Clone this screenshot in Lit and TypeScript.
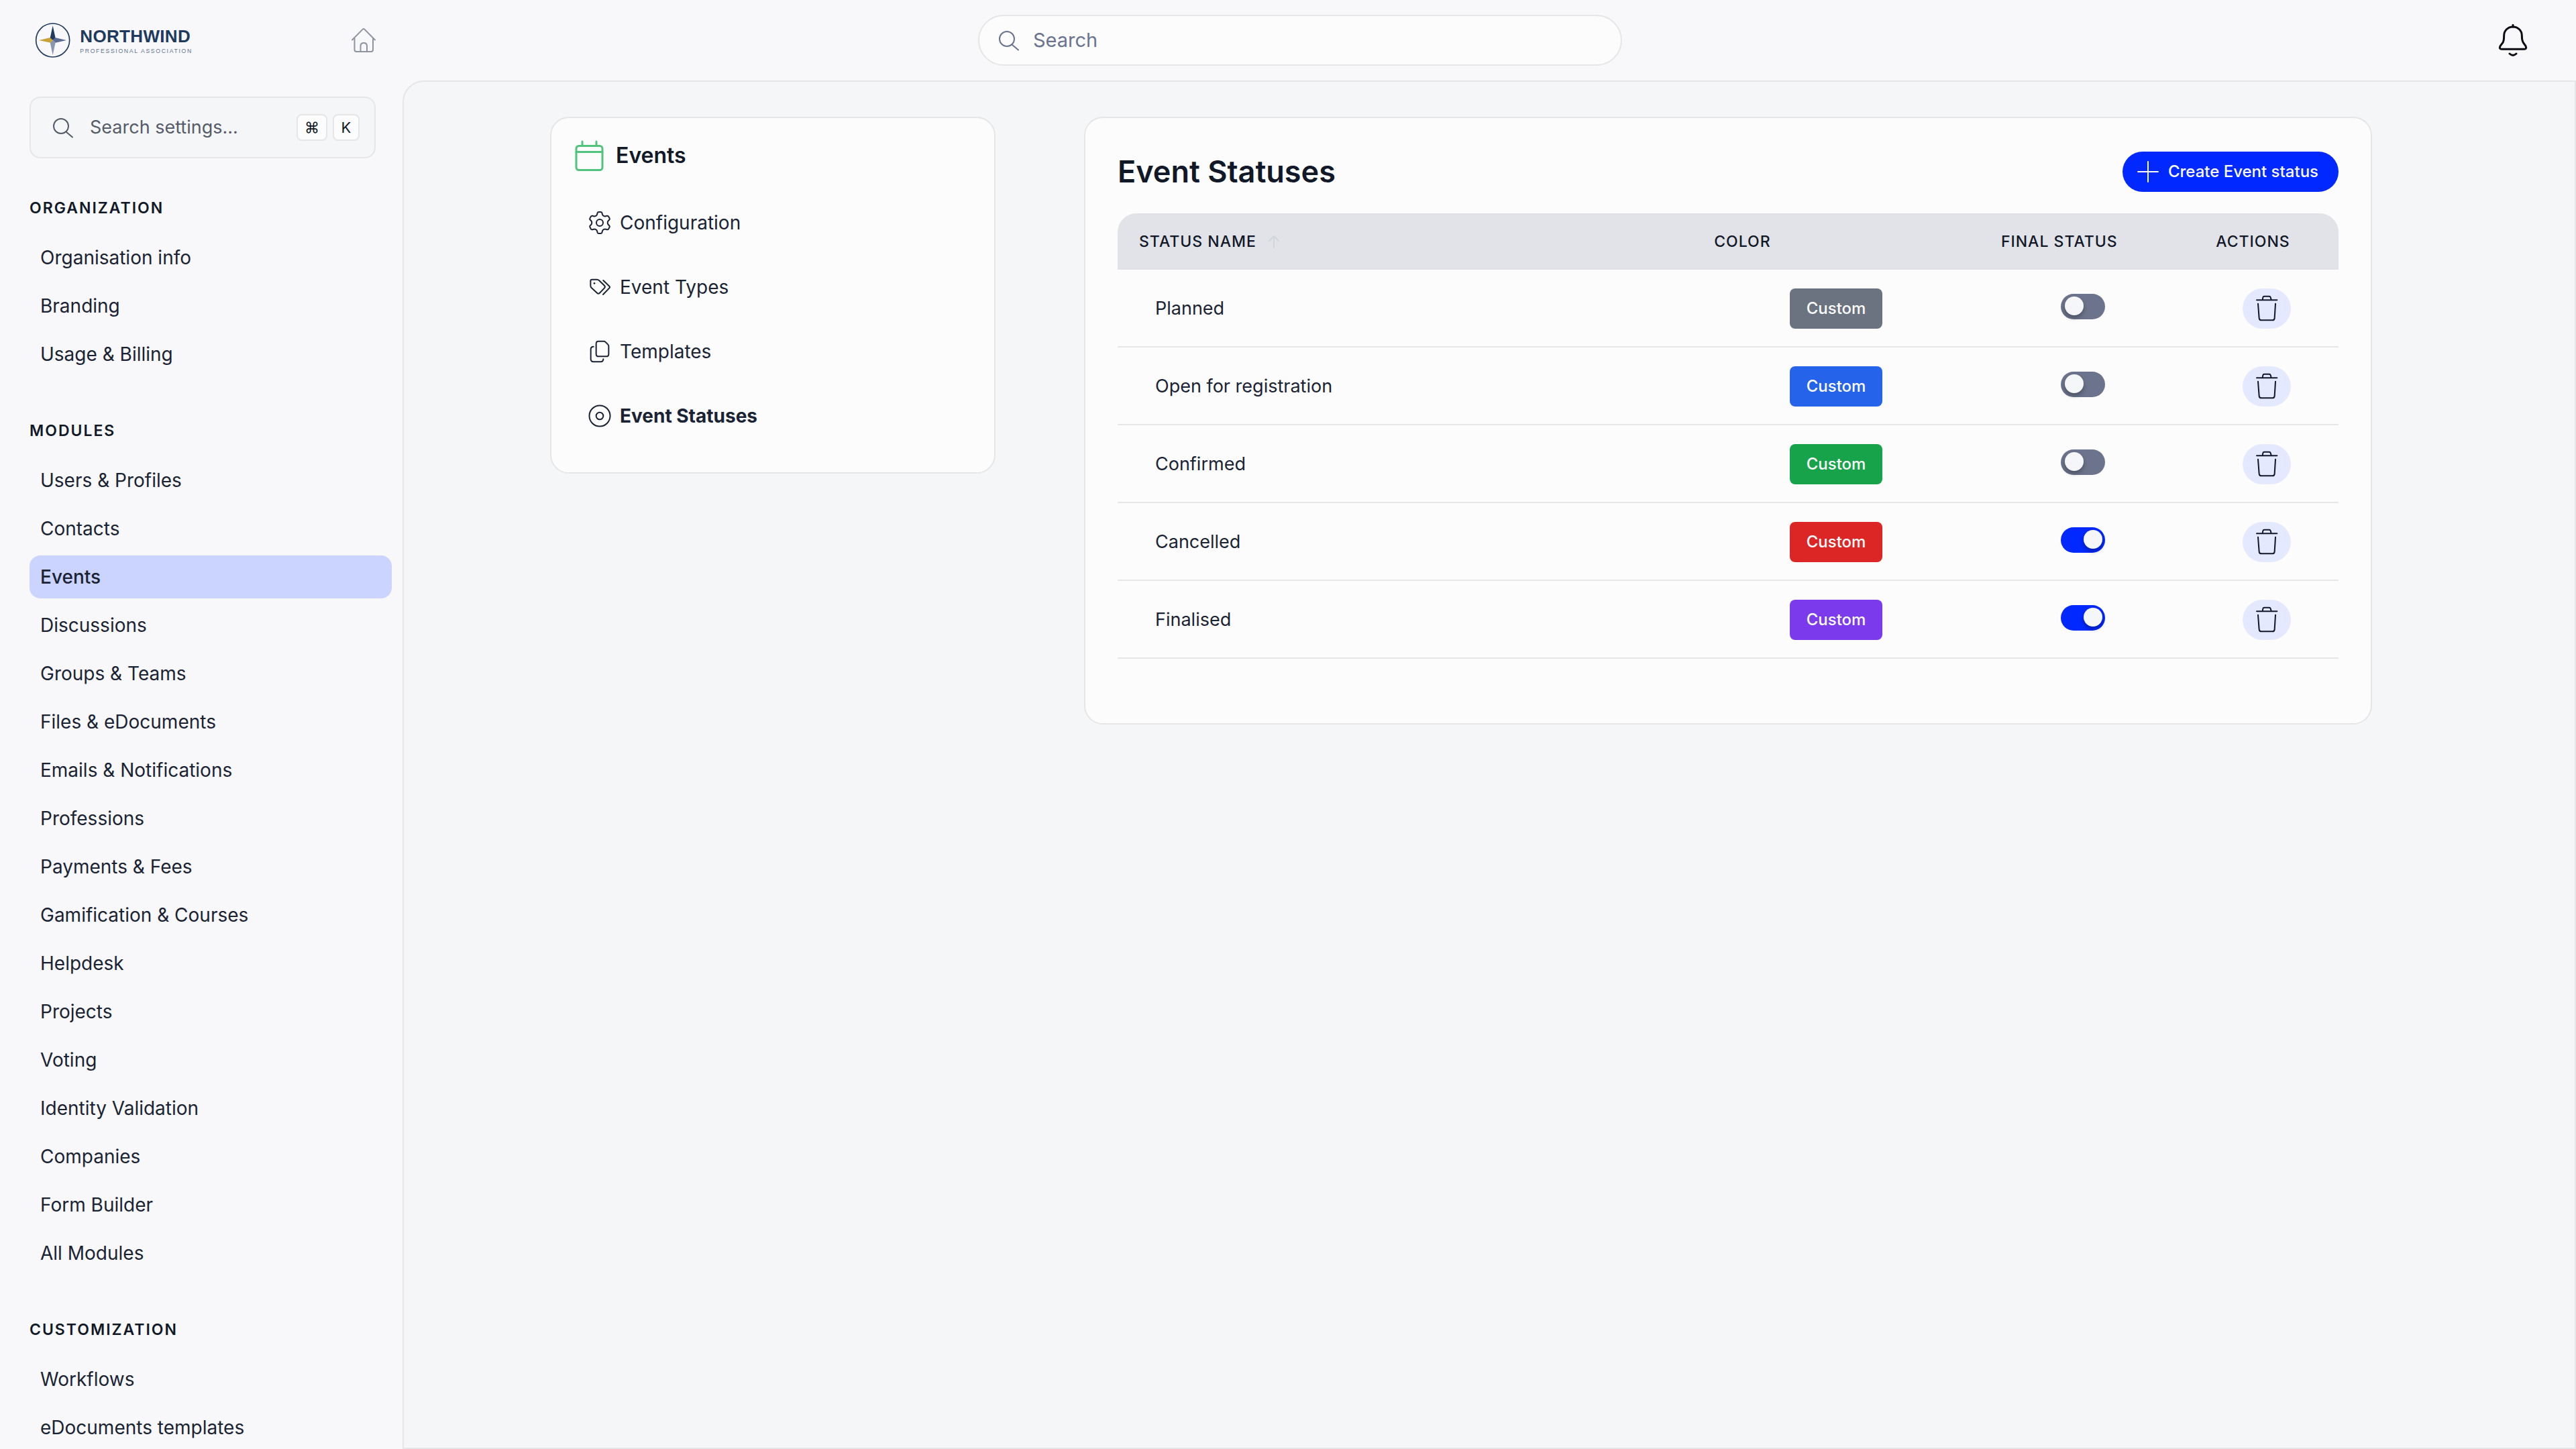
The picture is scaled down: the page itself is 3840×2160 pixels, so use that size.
import { LitElement, html, css, svg, nothing, TemplateResult } from "lit";
import { customElement, state } from "lit/decorators.js";

interface NavGroup {
  title: string;
  items: string[];
}

interface EventStatus {
  name: string;
  color: string;
  final: boolean;
}

const NAV: NavGroup[] = [
  { title: "Organization", items: ["Organisation info", "Branding", "Usage & Billing"] },
  {
    title: "Modules",
    items: [
      "Users & Profiles", "Contacts", "Events", "Discussions", "Groups & Teams",
      "Files & eDocuments", "Emails & Notifications", "Professions", "Payments & Fees",
      "Gamification & Courses", "Helpdesk", "Projects", "Voting", "Identity Validation",
      "Companies", "Form Builder", "All Modules",
    ],
  },
  { title: "Customization", items: ["Workflows", "eDocuments templates"] },
];

/** Outline of a six-tooth gear centred on the origin, with softened corners. */
function gearPath(): string {
  const tooth = [[-13, -33], [-9, -48], [9, -48], [13, -33]];
  const pts: number[][] = [];
  for (let i = 0; i < 6; i++) {
    const a = (i * Math.PI) / 3;
    for (const [x, y] of tooth) {
      pts.push([x * Math.cos(a) - y * Math.sin(a), x * Math.sin(a) + y * Math.cos(a)]);
    }
  }
  const toward = (p: number[], q: number[], d: number) => {
    const len = Math.hypot(q[0] - p[0], q[1] - p[1]);
    return [p[0] + ((q[0] - p[0]) * d) / len, p[1] + ((q[1] - p[1]) * d) / len]
      .map((n) => n.toFixed(1)).join(" ");
  };
  return pts.map((p, i) => {
    const prev = pts[(i + pts.length - 1) % pts.length];
    const next = pts[(i + 1) % pts.length];
    return `${i ? "L" : "M"}${toward(p, prev, 5)}Q${p[0].toFixed(1)} ${p[1].toFixed(1)} ${toward(p, next, 5)}`;
  }).join("") + "Z";
}

const icon = (viewBox: string, cls: string, body: TemplateResult) => html`
  <svg class="icon ${cls}" viewBox=${viewBox} aria-hidden="true">${body}</svg>`;

const searchIcon = () => icon("0 0 32 32", "i-search", svg`
  <circle cx="13" cy="14" r="11"/><path d="M20.5 22.5 30 30.5"/>`);

const homeIcon = () => icon("0 0 40 40", "i-home", svg`
  <path d="M3 19.500 18.700 3.600Q20 2.300 21.300 3.600L37 19.500"/>
  <path d="M6.500 17V34Q6.500 37 9.500 37H31Q34 37 34 34V17"/>
  <path d="M15.500 37V28.500Q15.500 24 20.250 24Q25 24 25 28.500V37"/>`);

const bellIcon = () => icon("486 108 144 144", "i-bell", svg`
  <path d="M558 112V120"/>
  <path d="M558 120C535 120 518 137 518 160C518 174 518 182 513 190L501 206Q495 220 508 220H608Q621 220 615 206L604 190C599 182 598 174 598 160C598 137 581 120 558 120Z"/>
  <path d="M543 240Q558 254 573 240"/>`);

const calendarIcon = () => icon("0 0 44 48", "i-calendar", svg`
  <rect x="3" y="9.500" width="39" height="36" rx="4"/><path d="M3 18.500H42M12 3V9M33 3V9"/>`);

const gearIcon = () => icon("-51 -51 102 102", "i-menu", svg`
  <path d=${gearPath()}/><circle r="15"/>`);

const tagsIcon = () => icon("201 733 102 102", "i-menu", svg`
  <path d="M217 750H240Q245 750 249 754L273 777Q278 782 273 788L251 811Q246 816 241 811L215 787Q211 783 211 778V756Q211 750 217 750Z"/>
  <path d="M268 754 295 780Q299 784 295 788L267 817"/><circle class="dot" cx="228" cy="767" r="4"/>`);

const copyIcon = () => icon("201 1023 102 102", "i-menu", svg`
  <path d="M246 1028H270Q274 1028 277 1031L289 1043Q292 1046 292 1050V1085Q292 1096 281 1096H247Q236 1096 236 1085V1039Q236 1028 246 1028Z"/>
  <path d="M224 1052Q212 1052 212 1064V1108Q212 1120 224 1120H256Q268 1120 268 1108"/>`);

const discIcon = () => icon("201 1311 102 102", "i-menu", svg`
  <circle cx="252" cy="1362" r="46.500"/><circle cx="252" cy="1362" r="16"/>`);

const plusIcon = () => icon("0 0 32 32", "i-plus", svg`<path d="M16 1V31M1 16H31"/>`);

const arrowIcon = () => icon("0 0 20 20", "i-arrow", svg`<path d="M10 19V2M3 9 10 2 17 9"/>`);

const trashIcon = () => icon("894 60 120 120", "i-trash", svg`
  <path d="M909 82H1000M935 80L937 70Q938 65 943 65H965Q970 65 971 70L974 80"/>
  <path d="M915 98 920 163Q921 172 930 172H979Q988 172 989 163L993 98"/>`);

const logo = () => html`
  <svg class="logo" viewBox="36 36 720 168" role="img" aria-label="Northwind Professional Association">
    <circle cx="116" cy="120" r="75" fill="none" stroke="#1f3a5f" stroke-width="5"/>
    <path fill="#1f3a5f" d="M116 55 128 110 116 120 104 110Z"/>
    <path fill="#5b6c94" d="M177 120 128 131 116 120 126 108Z"/>
    <path fill="#8797b0" d="M116 187 104 130 116 120 128 130Z"/>
    <path fill="#c9a23c" d="M54 120 104 108 116 120 106 131Z"/>
    <text class="brand" x="238" y="130">NORTHWIND</text>
    <text class="tagline" x="238" y="176">PROFESSIONAL ASSOCIATION</text>
  </svg>`;

@customElement("app-root")
export class AppRoot extends LitElement {
  static styles = css`
    :host {
      display: grid;
      grid-template: 120px minmax(0, 1fr) / 600px minmax(0, 1fr);
      height: 100vh;
      background: #f8f8fa;
      color: #1a2333;
      font-family: Inter, "Liberation Sans", sans-serif;
      font-size: 28px;
      line-height: 40px;
    }
    * { box-sizing: border-box; }
    a { color: inherit; text-decoration: none; }
    button { border: 0; padding: 0; background: none; color: inherit; font: inherit; cursor: pointer; }
    input { font: inherit; color: inherit; }
    h1, h2, ul { margin: 0; padding: 0; }
    ul { list-style: none; }

    .icon { display: block; flex: none; fill: none; stroke: currentColor; stroke-linecap: round; stroke-linejoin: round; }
    .dot { fill: currentColor; stroke: none; }
    .i-search { width: 32px; height: 32px; stroke-width: 2; }
    .i-home { width: 40px; height: 40px; stroke-width: 2; }
    .i-bell { width: 48px; height: 48px; stroke-width: 9; }
    .i-calendar { width: 44px; height: 48px; stroke-width: 3; color: #50c47c; }
    .i-menu { width: 34px; height: 34px; stroke-width: 6; }
    .i-plus { width: 32px; height: 32px; stroke-width: 2; }
    .i-arrow { width: 20px; height: 20px; stroke-width: 2; color: #d2d5da; }
    .i-trash { width: 40px; height: 40px; stroke-width: 6; }

    .topbar {
      grid-column: 1 / -1;
      display: grid;
      grid-template-columns: minmax(0, 1fr) 960px minmax(0, 1fr);
      align-items: center;
      padding: 0 8px 0 44px;
    }
    .topbar-left { display: flex; align-items: center; justify-content: space-between; width: 518px; padding-left: 8px; }
    .logo { display: block; width: 240px; height: 56px; }
    .brand { font: bold 78px "Liberation Sans", Arial, sans-serif; letter-spacing: 1px; fill: #1f3a5f; }
    .tagline { font: 26px "Liberation Sans", Arial, sans-serif; letter-spacing: 5px; fill: #62738f; }
    .home { color: #8d939f; }
    .search {
      display: flex;
      align-items: center;
      gap: 20px;
      height: 76px;
      padding: 0 28px;
      border: 2px solid #e5e6e8;
      border-radius: 38px;
      background: #fcfcfd;
      color: #69748e;
    }
    .search-input { flex: 1; min-width: 0; border: 0; outline: 0; padding: 0; background: none; font-size: 29px; }
    .search-input::placeholder { color: #69748e; opacity: 1; }
    .bell { justify-self: end; margin-right: 62px; color: #0b0d12; }

    .sidebar { padding: 24px 0 0 44px; overflow: hidden; }
    .quick {
      display: flex;
      align-items: center;
      width: 516px;
      height: 92px;
      margin-bottom: 56px;
      padding: 0 22px 0 32px;
      border: 2px solid #e5e6e8;
      border-radius: 16px;
      background: #f5f6f8;
      color: #555c69;
    }
    .quick-input { flex: 1; min-width: 0; margin-left: 24px; border: 0; outline: 0; padding: 0; background: none; font-size: 27px; }
    .quick-input::placeholder { color: #555c69; opacity: 1; }
    .keys { display: flex; gap: 8px; }
    .key {
      min-width: 40px;
      height: 40px;
      padding: 0 10px;
      border: 2px solid #e5e6e8;
      border-radius: 8px;
      background: #fcfcfd;
      color: #111827;
      font: 22px/36px Inter, "DejaVu Sans", sans-serif;
      text-align: center;
    }
    .group { margin-bottom: 64px; }
    .group-title { margin-bottom: 24px; color: #111827; font-size: 23px; line-height: 36px; font-weight: 600; letter-spacing: 2px; text-transform: uppercase; }
    .nav-list { display: grid; gap: 8px; }
    .nav-link { display: block; width: 540px; padding: 12px 16px; border-radius: 16px; }
    .nav-link.active { background: #cbd4ff; font-weight: 500; }

    .main {
      display: grid;
      grid-template-columns: minmax(0, 664fr) minmax(0, 1920fr);
      gap: 132px;
      align-items: start;
      padding: 52px 302px 52px 218px;
      border: 2px solid #e5e6e8;
      border-top-left-radius: 32px;
      background: #f5f6f8;
    }
    .card { border: 2px solid #e5e6e8; border-radius: 28px; background: #fcfcfd; }
    .menu { padding: 0 34px 36px; }
    .menu-title { display: flex; align-items: center; gap: 18px; height: 108px; padding-top: 4px; color: #111827; font-size: 32px; font-weight: 600; }
    .menu-link { display: flex; align-items: center; gap: 13px; height: 96px; padding-left: 21px; }
    .menu-link.active { font-weight: 700; }

    .panel { padding: 48px 48px 96px; }
    .panel-head { display: flex; align-items: center; justify-content: space-between; height: 64px; margin-bottom: 30px; }
    .panel-title { color: #111827; font-size: 45px; font-weight: 600; line-height: 64px; }
    .create {
      display: flex;
      align-items: center;
      gap: 14px;
      height: 60px;
      padding: 0 30px 0 22px;
      border-radius: 30px;
      background: #0028ff;
      color: #fcfcfd;
      font-size: 24px;
      font-weight: 500;
    }
    .table { width: 100%; table-layout: fixed; border-collapse: separate; border-spacing: 0; font-size: 27px; }
    .w-name { width: 47.1%; }
    .w-color { width: 23.5%; }
    .w-final { width: 17.6%; }
    th { height: 84px; padding: 0 32px; background: #e2e3e8; color: #111827; font-size: 23px; font-weight: 500; letter-spacing: 1px; text-align: left; text-transform: uppercase; white-space: nowrap; }
    th:first-child { border-top-left-radius: 28px; }
    th:last-child { border-top-right-radius: 28px; }
    .sort { display: inline-flex; align-items: center; gap: 16px; letter-spacing: inherit; text-transform: inherit; }
    td { height: 116px; padding: 2px 0 0; border-bottom: 2px solid #e5e6e8; }
    .c-name { padding-left: 56px; }
    .chip { display: block; width: 138px; height: 60px; margin: 0 auto; border-radius: 8px; background: var(--chip); color: #fcfcfd; font-size: 24px; font-weight: 500; }
    .c-final { padding: 2px 12px 6px 0; }
    .toggle {
      appearance: none;
      display: block;
      width: 66px;
      height: 38px;
      margin: 0 auto;
      padding: 4px 6px;
      border-radius: 19px;
      background: #6b748c;
      cursor: pointer;
    }
    .toggle::before { content: ""; display: block; width: 28px; height: 28px; border-radius: 50%; background: #f5f6f8; box-shadow: 0 4px 6px #0000004d; }
    .toggle:checked { background: #0028ff; }
    .toggle:checked::before { margin-left: 28px; }
    .trash { display: flex; align-items: center; justify-content: center; width: 72px; height: 60px; margin: 0 auto; border-radius: 30px; background: #e5e9ff; color: #111827; }
  `;

  @state() private statuses: EventStatus[] = [
    { name: "Planned", color: "#6b7280", final: false },
    { name: "Open for registration", color: "#2563eb", final: false },
    { name: "Confirmed", color: "#16a34a", final: false },
    { name: "Cancelled", color: "#dc2626", final: true },
    { name: "Finalised", color: "#7c3aed", final: true },
  ];

  private toggleFinal(index: number) {
    this.statuses = this.statuses.map((s, i) => (i === index ? { ...s, final: !s.final } : s));
  }

  private remove(index: number) {
    this.statuses = this.statuses.filter((_, i) => i !== index);
  }

  private menuLink(label: string, glyph: TemplateResult, active = false) {
    return html`<li><a class="menu-link ${active ? "active" : ""}" href="#"
      aria-current=${active ? "page" : nothing}>${glyph}<span>${label}</span></a></li>`;
  }

  private row(s: EventStatus, i: number) {
    return html`<tr>
      <td class="c-name">${s.name}</td>
      <td><button class="chip" style="--chip:${s.color}">Custom</button></td>
      <td class="c-final"><input class="toggle" type="checkbox" role="switch"
        aria-label="Final status: ${s.name}" .checked=${s.final} @change=${() => this.toggleFinal(i)}></td>
      <td><button class="trash" aria-label="Delete ${s.name}" @click=${() => this.remove(i)}>${trashIcon()}</button></td>
    </tr>`;
  }

  render() {
    return html`
      <header class="topbar">
        <div class="topbar-left">
          ${logo()}
          <a class="home" href="#" aria-label="Home">${homeIcon()}</a>
        </div>
        <label class="search">${searchIcon()}
          <input class="search-input" type="search" placeholder="Search" aria-label="Search">
        </label>
        <button class="bell" aria-label="Notifications">${bellIcon()}</button>
      </header>
      <aside class="sidebar">
        <label class="quick">${searchIcon()}
          <input class="quick-input" type="text" placeholder="Search settings..." aria-label="Search settings">
          <span class="keys"><kbd class="key">⌘</kbd><kbd class="key">K</kbd></span>
        </label>
        <nav aria-label="Settings">
          ${NAV.map((g) => html`<section class="group">
            <h2 class="group-title">${g.title}</h2>
            <ul class="nav-list">
              ${g.items.map((item) => html`<li><a class="nav-link ${item === "Events" ? "active" : ""}" href="#">${item}</a></li>`)}
            </ul>
          </section>`)}
        </nav>
      </aside>
      <main class="main">
        <nav class="card menu" aria-label="Events">
          <h2 class="menu-title">${calendarIcon()}Events</h2>
          <ul>
            ${this.menuLink("Configuration", gearIcon())}
            ${this.menuLink("Event Types", tagsIcon())}
            ${this.menuLink("Templates", copyIcon())}
            ${this.menuLink("Event Statuses", discIcon(), true)}
          </ul>
        </nav>
        <section class="card panel">
          <div class="panel-head">
            <h1 class="panel-title">Event Statuses</h1>
            <button class="create">${plusIcon()}Create Event status</button>
          </div>
          <table class="table">
            <colgroup><col class="w-name"><col class="w-color"><col class="w-final"><col></colgroup>
            <thead><tr>
              <th scope="col"><button class="sort">Status name ${arrowIcon()}</button></th>
              <th scope="col">Color</th>
              <th scope="col">Final status</th>
              <th scope="col">Actions</th>
            </tr></thead>
            <tbody>${this.statuses.map((s, i) => this.row(s, i))}</tbody>
          </table>
        </section>
      </main>`;
  }
}
